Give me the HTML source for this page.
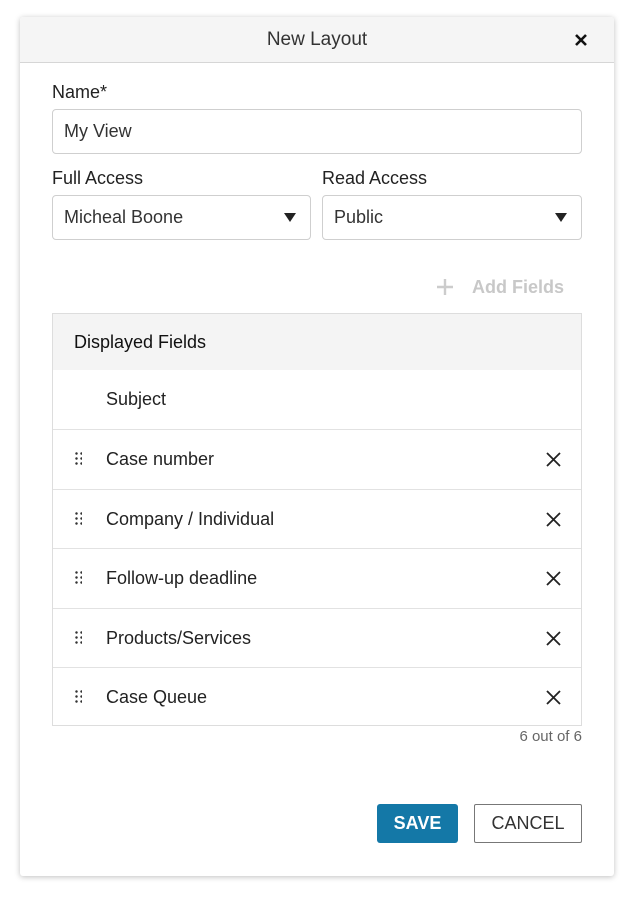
<!DOCTYPE html>
<html><head><style>
*{box-sizing:border-box;margin:0;padding:0}
body{width:621px;height:903px;background:#fff;font-family:"Liberation Sans",sans-serif;color:#222;position:relative;overflow:hidden}
.dlg{position:absolute;left:20px;top:17px;width:594px;height:859px;background:#fff;border-radius:3px;box-shadow:0 1px 6px rgba(0,0,0,.25)}
.hd{height:46px;background:#f5f5f5;border-bottom:1px solid #d6d6d6;border-radius:3px 3px 0 0;text-align:center;font-size:19px;line-height:46px;color:#333}
.x{position:absolute;right:26px;top:16px}
.a{position:absolute}
.lbl{font-size:18px;color:#222}
.inp{border:1px solid #cfcfcf;border-radius:4px;height:45px;font-size:18px;line-height:43px;padding-left:11px;color:#333}
.tri{position:absolute;right:14px;top:17px;width:0;height:0;border-left:6px solid transparent;border-right:6px solid transparent;border-top:9px solid #222}
.tbl{position:absolute;left:32px;top:296px;width:530px;height:413px;border:1px solid #ddd}
.th{height:56px;background:#f4f4f4;font-size:18px;line-height:56px;padding-left:21px;color:#111}
.row{height:59.4px;border-top:1px solid #e2e2e2;position:relative;font-size:18px;line-height:59px;padding-left:53px;color:#222}
.dr{position:absolute;left:21px;top:21px;width:8px;height:15px;background:radial-gradient(circle,#333 1.1px,transparent 1.4px) 0 0/5px 5px}
.rx{position:absolute;right:20px;top:22px}
</style></head><body>
<div class="dlg">
<div class="hd">New Layout<svg class="x" width="14" height="14" viewBox="0 0 14 14"><path d="M2 2L12 12M12 2L2 12" stroke="#111" stroke-width="2.6"/></svg></div>
<div class="a lbl" style="left:32px;top:65px">Name*</div>
<div class="a inp" style="left:32px;top:92px;width:530px">My View</div>
<div class="a lbl" style="left:32px;top:151px">Full Access</div>
<div class="a lbl" style="left:302px;top:151px">Read Access</div>
<div class="a inp" style="left:32px;top:178px;width:259px">Micheal Boone<span class="tri"></span></div>
<div class="a inp" style="left:302px;top:178px;width:260px">Public<span class="tri"></span></div>
<svg class="a" style="left:416px;top:261px" width="18" height="18" viewBox="0 0 18 18"><path d="M9 1V17M1 9H17" stroke="#ccc" stroke-width="2.4"/></svg>
<div class="a" style="left:452px;top:260px;font-size:18px;font-weight:bold;color:#c8c8c8">Add Fields</div>
<div class="tbl">
<div class="th">Displayed Fields</div>
<div class="row" style="border-top:none">Subject</div>
<div class="row"><span class="dr"></span>Case number<svg class="rx" width="15" height="15" viewBox="0 0 15 15"><path d="M1 1L14 14M14 1L1 14" stroke="#222" stroke-width="1.8"/></svg></div>
<div class="row"><span class="dr"></span>Company / Individual<svg class="rx" width="15" height="15" viewBox="0 0 15 15"><path d="M1 1L14 14M14 1L1 14" stroke="#222" stroke-width="1.8"/></svg></div>
<div class="row"><span class="dr"></span>Follow-up deadline<svg class="rx" width="15" height="15" viewBox="0 0 15 15"><path d="M1 1L14 14M14 1L1 14" stroke="#222" stroke-width="1.8"/></svg></div>
<div class="row"><span class="dr"></span>Products/Services<svg class="rx" width="15" height="15" viewBox="0 0 15 15"><path d="M1 1L14 14M14 1L1 14" stroke="#222" stroke-width="1.8"/></svg></div>
<div class="row"><span class="dr"></span>Case Queue<svg class="rx" width="15" height="15" viewBox="0 0 15 15"><path d="M1 1L14 14M14 1L1 14" stroke="#222" stroke-width="1.8"/></svg></div>
</div>
<div class="a" style="right:32px;top:711px;font-size:15px;color:#666">6 out of 6</div>
<div class="a" style="left:357px;top:787px;width:81px;height:39px;background:#1478a7;border-radius:3px;color:#fff;font-weight:bold;font-size:18px;line-height:39px;text-align:center">SAVE</div>
<div class="a" style="left:454px;top:787px;width:108px;height:39px;border:1px solid #777;border-radius:2px;color:#333;font-size:18px;line-height:37px;text-align:center">CANCEL</div>
</div>
</body></html>
